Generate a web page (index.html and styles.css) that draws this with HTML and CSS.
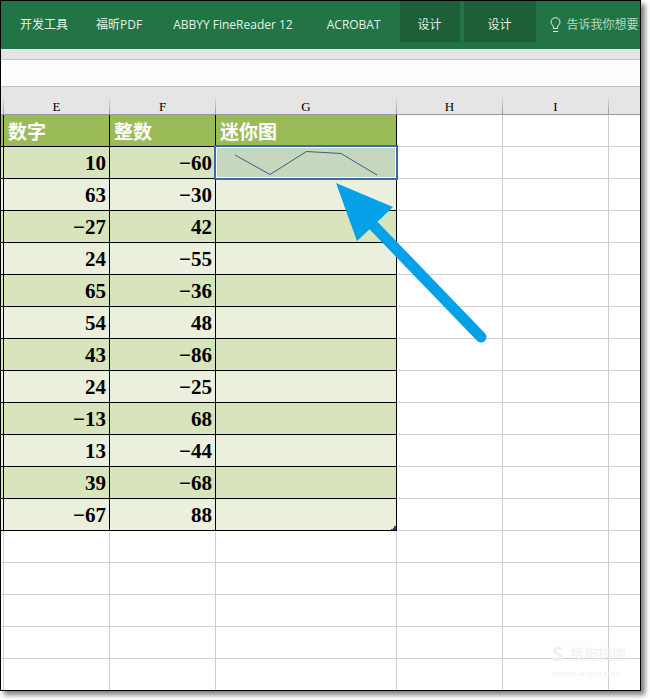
FILE: index.html
```html
<!DOCTYPE html>
<html lang="zh-CN">
    <head>
        <meta charset="utf-8">
        <title>迷你图</title>
        <link rel="stylesheet" href="styles.css">
    </head>
    <body>
        <div class="window">
            <nav class="ribbon">
                <button class="tab">开发工具</button>
                <button class="tab">福昕PDF</button>
                <button class="tab latin">ABBYY FineReader 12</button>
                <button class="tab latin">ACROBAT</button>
                <button class="tab tool">设计</button>
                <button class="tab tool wide">设计</button>
                <button class="tell-me">
                    <svg class="bulb" width="11" height="16" viewBox="0 0 11 16" fill="none" stroke="#e2f3e8">
                        <path d="M3.5 11.5V10C3.500 8.500 1 7.500 1 5a4.500 4.300 0 0 1 9 0c0 2.500-2.500 3.500-2.500 5v1.500zM3 14.500h5"/>
                    </svg>
                    告诉我你想要
                </button>
            </nav>
            <div class="gap"></div>
            <div class="formula-bar"></div>
            <table class="sheet">
                <colgroup>
                    <col class="col-edge"><col class="col"><col class="col"><col class="col-spark"><col class="col"><col class="col"><col>
                </colgroup>
                <thead>
                    <tr><th></th><th>E</th><th>F</th><th>G</th><th>H</th><th>I</th><th></th></tr>
                </thead>
                <tbody class="data">
                    <tr class="title"><td></td><td>数字</td><td>整数</td><td>迷你图</td><td></td><td></td><td></td></tr>
                    <tr><td></td><td>10</td><td>−60</td>
                        <td class="spark">
                            <div class="selection"></div>
                            <svg class="sparkline" viewBox="0 0 180 31" fill="none" stroke="#3b5e86">
                                <path d="M19 8L54 27.500L90.500 4.500L125 6.500L161 28"/>
                            </svg>
                        </td>
                        <td></td><td></td><td></td></tr>
                    <tr><td></td><td>63</td><td>−30</td><td></td><td></td><td></td><td></td></tr>
                    <tr><td></td><td>−27</td><td>42</td><td></td><td></td><td></td><td></td></tr>
                    <tr><td></td><td>24</td><td>−55</td><td></td><td></td><td></td><td></td></tr>
                    <tr><td></td><td>65</td><td>−36</td><td></td><td></td><td></td><td></td></tr>
                    <tr><td></td><td>54</td><td>48</td><td></td><td></td><td></td><td></td></tr>
                    <tr><td></td><td>43</td><td>−86</td><td></td><td></td><td></td><td></td></tr>
                    <tr><td></td><td>24</td><td>−25</td><td></td><td></td><td></td><td></td></tr>
                    <tr><td></td><td>−13</td><td>68</td><td></td><td></td><td></td><td></td></tr>
                    <tr><td></td><td>13</td><td>−44</td><td></td><td></td><td></td><td></td></tr>
                    <tr><td></td><td>39</td><td>−68</td><td></td><td></td><td></td><td></td></tr>
                    <tr><td></td><td>−67</td><td>88</td><td class="corner"></td><td></td><td></td><td></td></tr>
                </tbody>
                <tbody class="empty">
                    <tr><td></td><td></td><td></td><td></td><td></td><td></td><td></td></tr>
                    <tr><td></td><td></td><td></td><td></td><td></td><td></td><td></td></tr>
                    <tr><td></td><td></td><td></td><td></td><td></td><td></td><td></td></tr>
                    <tr><td></td><td></td><td></td><td></td><td></td><td></td><td></td></tr>
                    <tr><td></td><td></td><td></td><td></td><td></td><td></td><td></td></tr>
                </tbody>
            </table>
            <svg class="arrow" width="152" height="160" viewBox="0 0 152 160">
                <path d="M1 0L58 24L22 58z" fill="#04a1e8"/>
                <path d="M38 42L146 154" stroke="#04a1e8" stroke-width="11" stroke-linecap="round"/>
            </svg>
            <div class="watermark"><b>S</b><span>搜狗指南</span><small>zhinan.sogou.com</small></div>
        </div>
    </body>
</html>
```
FILE: styles.css
```css
*{
    box-sizing: border-box;
}
body{
    margin: 0;
    padding: 0 9px 9px 0;
    background-color: white;
    font-family: "Open Sans", "Noto Sans CJK SC", sans-serif;
}
.window{
    position: relative;
    overflow: hidden;
    border: 1px solid black;
    box-shadow: 4px 4px 5px rgba(0,0,0,0.5);
    background-color: white;
}
/* ribbon */
.ribbon{
    display: flex;
    align-items: flex-start;
    height: 48px;
    padding-left: 5px;
    background-color: #227447;
}
.ribbon button{
    flex: none;
    height: 41px;
    padding: 6px 14px 0;
    border: none;
    background: none;
    color: #e2f3e8;
    font-family: inherit;
    font-size: 12px;
    line-height: 20px;
    white-space: nowrap;
}
.ribbon .latin{
    padding: 6px 17px 0;
}
.ribbon .tool{
    width: 60px;
    margin: 0 4px 0 2px;
    background-color: #1c5f39;
}
.ribbon .wide{
    width: 72px;
    margin: 0;
}
.ribbon .tell-me{
    display: flex;
    align-items: center;
    gap: 6px;
    color: #b5dac3;
}
.gap{
    height: 10px;
    background-color: #e5e5e5;
}
.formula-bar{
    height: 28px;
    border-top: 1px solid #bfc2c5;
    border-bottom: 1px solid #bfc2c5;
    background-color: #fdfdfd;
}
/* sheet */
.sheet{
    width: 100%;
    table-layout: fixed;
    border-collapse: separate;
    border-spacing: 0;
}
.col-edge{
    width: 3px;
}
.col{
    width: 106px;
}
.col-spark{
    width: 181px;
}
th{
    height: 28px;
    padding: 12px 1px 0 0;
    border-bottom: 1px solid #999;
    background: linear-gradient(#e5e5e5, #999) right bottom / 1px 18px no-repeat #e5e5e5;
    font-family: "Liberation Serif", serif;
    font-size: 13px;
    font-weight: normal;
    line-height: 15px;
}
th:last-child{
    background: #e5e5e5;
}
td{
    height: 32px;
    padding: 0;
    border-right: 1px solid #d0d0d0;
    border-bottom: 1px solid #d0d0d0;
}
td:last-child{
    border-right: none;
}
.data td:nth-child(-n+4){
    padding: 0 3px 0 4px;
    border-color: black;
    background-color: #ebf0de;
    font-family: "Liberation Serif", serif;
    font-size: 21px;
    font-weight: bold;
    line-height: 24px;
    text-align: right;
}
.data tr:nth-child(even) td:nth-child(-n+4){
    background-color: #d8e4bc;
}
.data td:first-child, .data td:first-child:nth-child(-n+4){
    padding: 0;
}
.data .title td:nth-child(-n+4){
    background-color: #9bbb59;
    color: white;
    font-family: "Noto Sans CJK SC", sans-serif;
    font-size: 19px;
    text-align: left;
}
.empty tr:last-child td{
    height: 31px;
    border-bottom: none;
}
.data .spark{
    position: relative;
}
.selection{
    position: absolute;
    inset: -2px;
    border: 2px solid #3a6ab0;
    box-shadow: inset 0 0 0 1px white;
    background-color: #c6d7bd;
}
.sparkline{
    position: absolute;
    inset: 0;
}
.data .corner{
    background-image: linear-gradient(135deg, transparent 50%, #2f3c78 50%);
    background-position: right bottom;
    background-size: 5px 5px;
    background-repeat: no-repeat;
}
.arrow{
    position: absolute;
    left: 334px;
    top: 182px;
}
.watermark{
    position: absolute;
    right: 14px;
    bottom: 12px;
    display: grid;
    grid-template-columns: 18px auto;
    row-gap: 4px;
    color: #f0f0f0;
    font-size: 14px;
    line-height: 20px;
}
.watermark b{
    font-size: 20px;
}
.watermark small{
    grid-column: 1 / 3;
    font-size: 8px;
    line-height: 10px;
}
```
